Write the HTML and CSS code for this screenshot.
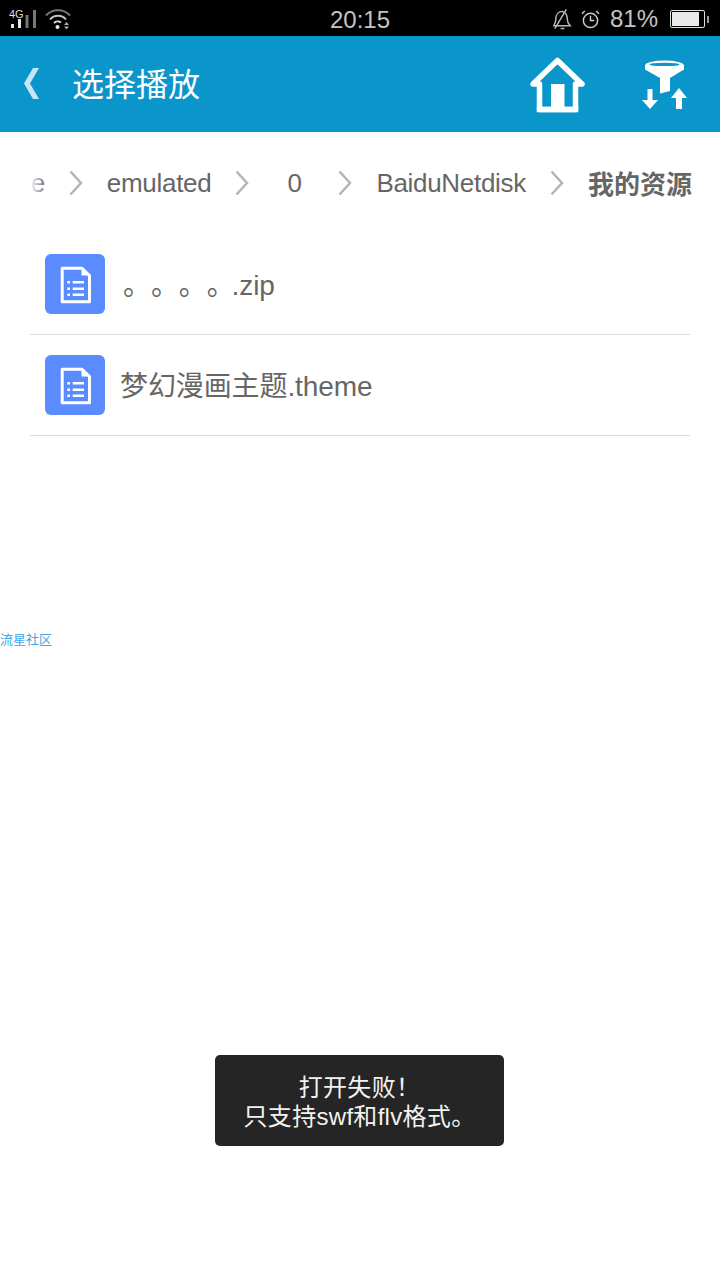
FILE: index.html
```html
<!DOCTYPE html>
<html lang="zh">
<head>
<meta charset="utf-8">
<title>选择播放</title>
<link rel="stylesheet" href="styles.css">
</head>
<body>
<div class="page">
  <div class="status">
    <div class="status-left">
      <div class="signal">
        <span class="net">4G</span>
        <svg width="27" height="18" viewBox="0 0 27 18"><rect x="2" y="14" width="3" height="4" fill="#e6e6e6"/><rect x="9" y="9" width="3" height="9" fill="#e6e6e6"/><rect x="16.500" y="5" width="3" height="13" fill="#777"/><rect x="24" y="0" width="3" height="18" fill="#777"/></svg>
      </div>
      <svg class="wifi" width="26" height="22" viewBox="0 0 26 22" fill="none"><path d="M1 7.500C7 .5 19 .5 25 7.500" stroke="#777" stroke-width="2"/><path d="M5 11.500C9 6.500 17 6.500 21 11.500" stroke="#c4c4c4" stroke-width="2"/><path d="M9 15C11 13 14 13 16 14.500" stroke="#ddd" stroke-width="2"/><circle cx="12.500" cy="19" r="2" fill="#eee"/><path d="M19 17l2.500-3 2.500 3zM19 18.500l2.500 3 2.500-3z" fill="#aaa"/></svg>
    </div>
    <div class="clock">20:15</div>
    <div class="status-right">
      <svg width="21" height="22" viewBox="0 0 22 22" fill="none" stroke="#bbb" stroke-width="1.500"><path d="M2 18h17c-2-2-3-4-3-7 0-4-2-7-5-8-4 0-7 3-7 8 0 3-1 5-2 7z"/><path d="M9 21h4M3 21L15 1"/></svg>
      <svg class="alarm" width="19" height="19" viewBox="0 0 20 20" fill="none" stroke="#ccc" stroke-width="1.500"><circle cx="10" cy="11" r="7.500"/><path d="M10 6v5h4M1 4l3-3M19 4l-3-3"/></svg>
      <span class="pct">81%</span>
      <div class="battery"><div class="battery-body"><div class="battery-fill"></div></div><div class="battery-tip"></div></div>
    </div>
  </div>

  <header class="bar">
    <svg class="back" width="16" height="32" viewBox="0 0 16 32"><path d="M9 0h6L6 15.500 15 31H9L0 15.500z" fill="#c6e6f3"/></svg>
    <h1 class="title">选择播放</h1>
    <svg class="home" width="56" height="56" viewBox="0 0 56 56" fill="none"><path d="M9.500 52.500V27H3L27.500 3.500 52 27H45.500V52.500z" stroke="#fff" stroke-width="5.500" stroke-linejoin="round"/><rect x="6.750" y="49.750" width="41.500" height="5.500" fill="#fff"/><rect x="21" y="27" width="13.500" height="27" fill="#fff"/></svg>
    <svg class="filter" width="46" height="52" viewBox="0 0 46 52"><ellipse cx="22.500" cy="5.500" rx="19.500" ry="5" fill="#fff"/><ellipse cx="22.500" cy="4.500" rx="15" ry="1.800" fill="#0a96cb"/><path d="M3 6h39v3.500L28 18v13l-10 2.500V18L3 9.500z" fill="#fff"/><path d="M5.500 29h5v11h5.500l-8 9-8-9h5.500zM34 49h6V38h5l-8-10-8 10h5z" fill="#fff"/></svg>
  </header>

  <nav class="crumbs">
    <div class="crumbs-track">
      <span class="crumb">storage</span>
      <svg class="sep" width="14" height="26" viewBox="0 0 14 26" fill="none"><path d="M1.500 1.500L12 13 1.500 24.500" stroke="#b4b4b4" stroke-width="2.500"/></svg>
      <span class="crumb">emulated</span>
      <svg class="sep" width="14" height="26" viewBox="0 0 14 26" fill="none"><path d="M1.500 1.500L12 13 1.500 24.500" stroke="#b4b4b4" stroke-width="2.500"/></svg>
      <span class="crumb crumb-zero">0</span>
      <svg class="sep" width="14" height="26" viewBox="0 0 14 26" fill="none"><path d="M1.500 1.500L12 13 1.500 24.500" stroke="#b4b4b4" stroke-width="2.500"/></svg>
      <span class="crumb">BaiduNetdisk</span>
      <svg class="sep" width="14" height="26" viewBox="0 0 14 26" fill="none"><path d="M1.500 1.500L12 13 1.500 24.500" stroke="#b4b4b4" stroke-width="2.500"/></svg>
      <span class="crumb crumb-current">我的资源</span>
    </div>
  </nav>

  <ul class="files">
    <li class="file">
      <div class="file-icon"><svg width="34" height="40" viewBox="0 0 34 40" fill="none"><path d="M4.200 4.200H24L31.500 11.500V37.800H4.200z" stroke="#fff" stroke-width="3" stroke-linejoin="round"/><path d="M23.500 3v8.500H33z" fill="#fff"/><path d="M9.300 17h2.700v2.400H9.300zM9.300 23.500h2.700v2.400H9.300zM9.300 29.500h2.700v2.400H9.300zM14.700 17H26v2.400H14.700zM14.700 23.500H26v2.400H14.700zM14.700 29.500H26v2.400H14.700z" fill="#fff"/></svg></div>
      <span class="file-name"><span class="dots">。。。。</span>.zip</span>
    </li>
    <li class="file">
      <div class="file-icon"><svg width="34" height="40" viewBox="0 0 34 40" fill="none"><path d="M4.200 4.200H24L31.500 11.500V37.800H4.200z" stroke="#fff" stroke-width="3" stroke-linejoin="round"/><path d="M23.500 3v8.500H33z" fill="#fff"/><path d="M9.300 17h2.700v2.400H9.300zM9.300 23.500h2.700v2.400H9.300zM9.300 29.500h2.700v2.400H9.300zM14.700 17H26v2.400H14.700zM14.700 23.500H26v2.400H14.700zM14.700 29.500H26v2.400H14.700z" fill="#fff"/></svg></div>
      <span class="file-name">梦幻漫画主题.theme</span>
    </li>
  </ul>

  <div class="watermark">流星社区</div>
  <div class="toast">打开失败！<br>只支持swf和flv格式。</div>
</div>
</body>
</html>
```
FILE: styles.css
```css
* { box-sizing: border-box; }
html, body { margin: 0; padding: 0; background: #fff; }
body { font-family: "Liberation Sans", "Noto Sans CJK SC", sans-serif; text-spacing-trim: space-all; }
.page { position: relative; width: 720px; height: 1280px; overflow: hidden; background: #fff; }

.status { height: 36px; background: #000; display: grid; grid-template-columns: 1fr auto 1fr; align-items: center; color: #c4c4c4; }
.status-left { display: flex; align-items: center; padding-left: 9px; gap: 9px; }
.signal { position: relative; width: 27px; height: 18px; display: flex; }
.net { position: absolute; left: 0; top: 0; font-size: 11px; line-height: 9px; color: #ddd; }
.clock { font-size: 24px; line-height: 36px; padding-top: 2px; width: 60px; text-align: center; }
.status-right { display: flex; align-items: center; justify-content: flex-end; padding-right: 11px; }
.alarm { margin-left: 8px; }
.pct { font-size: 24px; line-height: 36px; margin-left: 10px; }
.battery { display: flex; align-items: center; margin-left: 12px; }
.battery-body { width: 35px; height: 18px; border: 1px solid #ddd; border-radius: 2px; padding: 1px; background: #000; }
.battery-fill { width: 27px; height: 100%; background: #e8e8e8; }
.battery-tip { width: 2px; height: 7px; background: #999; margin-left: 2px; }

.bar { height: 96px; background: #0a96cb; display: flex; align-items: center; padding-left: 24px; }
.back { flex: none; }
.title { margin: 0 0 4px 32px; font-size: 32px; font-weight: 400; color: #fff; line-height: 40px; flex: 1; font-family: "Noto Sans CJK SC", sans-serif; }
.home { flex: none; margin-right: 56px; margin-top: 1px; }
.filter { flex: none; margin-right: 32px; margin-top: 3px; }

.crumbs { position: relative; margin: 0 28px 0 30px; height: 102px; overflow: hidden; display: flex; justify-content: flex-end; align-items: center; }
.crumbs::before { content: ""; position: absolute; left: 0; top: 0; bottom: 0; width: 16px; background: linear-gradient(to right, #fff, rgba(255, 255, 255, 0)); z-index: 1; }
.crumbs-track { display: flex; align-items: center; flex: none; gap: 24px; }
.crumb { font-size: 26px; line-height: 32px; color: #666; white-space: nowrap; flex: none; letter-spacing: -0.3px; }
.crumb-zero { width: 14px; margin: 0 13px 0 14px; letter-spacing: 0; }
.crumb-current { font-weight: 700; font-family: "Noto Sans CJK SC", sans-serif; letter-spacing: 0; }
.sep { flex: none; }

.files { list-style: none; margin: 0 30px; padding: 0; }
.file { display: flex; align-items: center; height: 101px; padding: 0 15px; border-bottom: 1px solid #dcdcdc; }
.file-icon { width: 60px; height: 60px; border-radius: 6px; background: #5b8cff; display: flex; align-items: center; justify-content: center; flex: none; }
.file-name { margin-left: 15px; padding-top: 4px; font-size: 28px; line-height: 36px; color: #666; letter-spacing: -0.1px; }
.dots { margin-left: 3px; margin-right: -3px; }

.watermark { position: absolute; left: 0; top: 632px; font-size: 13px; line-height: 16px; color: #3ea6e8; }
.toast { position: absolute; left: 215px; top: 1055px; width: 289px; height: 91px; border-radius: 5px; background: #252525; color: #f2f2f2; font-size: 24px; line-height: 29px; letter-spacing: 0.3px; text-align: center; padding-top: 18px; }
```
